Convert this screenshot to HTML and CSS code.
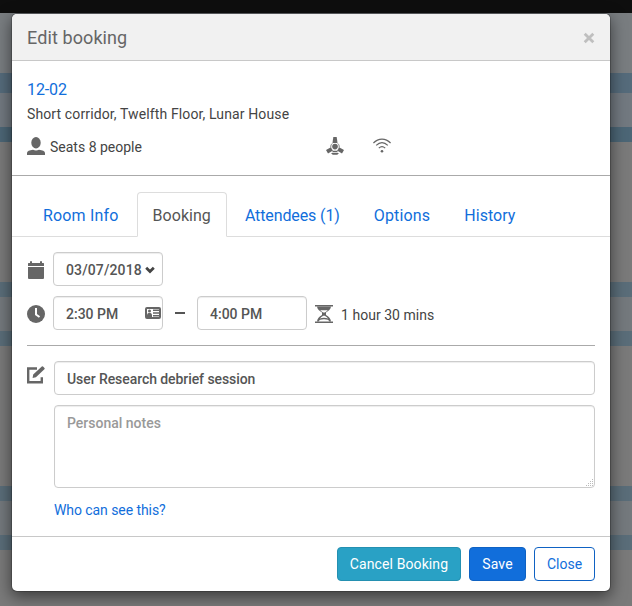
FILE: index.html
```html
<!DOCTYPE html>
<html lang="en">
<head>
<meta charset="utf-8">
<title>Edit booking</title>
<link rel="stylesheet" href="styles.css">
</head>
<body>
<div class="page">
  <div class="topbar"></div>
  <div class="band band-tall"></div>
  <div class="band band-head"></div>
  <div class="band band-mid"></div>
  <div class="band band-edge band-deep"></div>
  <div class="band band-gap"></div>
  <div class="band band-edge"></div>
  <div class="band band-mid band-pale"></div>
  <div class="band band-edge"></div>
  <div class="band band-gap"></div>
  <div class="band band-edge"></div>
  <div class="band band-mid band-pale"></div>
  <div class="band band-edge"></div>
</div>
<div class="modal" role="dialog">
  <header class="modal-header">
    <h4 class="modal-title">Edit booking</h4>
    <button class="dismiss" aria-label="Close dialog"><svg width="12" height="12" viewBox="0 0 12 12"><path d="M1.700 1.700l8.600 8.600M10.300 1.700l-8.600 8.600" stroke="currentColor" stroke-width="2.800"/></svg></button>
  </header>
  <section class="room">
    <a class="room-name">12-02</a>
    <div class="room-place">Short corridor, Twelfth Floor, Lunar House</div>
    <div class="facts">
      <div class="seats">
        <svg class="icon" width="18" height="18" viewBox="0 0 18 18"><ellipse cx="9" cy="5.700" rx="4.700" ry="5.700"/><path d="M6 12.800q3 1.400 6 0c3.500.4 6 1.400 6 3.200v2H0v-2c0-1.800 2.500-2.800 6-3.200z"/></svg>
        <span>Seats 8 people</span>
      </div>
      <svg class="icon phone" width="18" height="18" viewBox="0 0 18 18"><path d="M7.300 0h3.400l.8 6h-5z"/><circle cx="9" cy="9.600" r="2.800"/><path d="M6.300 6.400c-1.700 1.500-1.900 3.400-1.100 5.400M11.700 6.400c1.700 1.500 1.900 3.400 1.100 5.400" class="thin"/><path d="M4.500 10.400l2.500 3.200-5 2.900-2-3.600zM13.500 10.400l-2.500 3.200 5 2.900 2-3.600zM6.900 13.800h4.200l.8 1.400H6.100zM5 16h8l-1.700 1.800H6.700z"/></svg>
      <svg class="icon wifi" width="18" height="16" viewBox="0 0 18 16"><path class="line" d="M.4 6c5-5.300 12.200-5.300 17.200 0M3.200 8.400c3.700-3.800 7.900-3.800 11.600 0M5.800 11.100c2.100-2 4.300-2 6.400 0"/><circle cx="9" cy="14.200" r="1.300"/></svg>
    </div>
  </section>
  <nav class="tabs">
    <a class="tab">Room Info</a>
    <a class="tab snug active">Booking</a>
    <a class="tab tight">Attendees (1)</a>
    <a class="tab">Options</a>
    <a class="tab snug">History</a>
  </nav>
  <main class="form">
    <div class="row">
      <svg class="icon calendar" width="18" height="18" viewBox="0 0 18 18"><path d="M1 5V2.600Q1 2 1.600 2H3V.3h2V2h8V.3h2V2h1.400q.6 0 .6.600V5zM1 6h16v11q0 1-1 1H2q-1 0-1-1z"/></svg>
      <div class="control date"><span>03/07/2018</span><svg width="10" height="8" viewBox="0 0 10 8"><path d="M1.200 1.700L5 5.500l3.800-3.800" fill="none" stroke="#444" stroke-width="2.700"/></svg></div>
    </div>
    <div class="row times">
      <svg class="icon clock" width="18" height="18" viewBox="0 0 18 18"><circle cx="9" cy="9" r="9"/><path d="M9 3v6.500l3.500 2.500" fill="none" stroke="#fff" stroke-width="2"/></svg>
      <div class="control time"><span>2:30 PM</span><svg class="icon card" width="16" height="12" viewBox="0 0 16 12"><rect x="1" y="1" width="14" height="10" rx="1" fill="none" stroke="#666" stroke-width="2"/><circle cx="4.500" cy="4" r="1.500"/><path d="M2 10V8.300q0-1.800 1.500-2.300h2q1.500.5 1.500 2.300V10zM8 2.500h6V4H8zM8 5.200h6v1.500H8zM8 8h6v1.500H8z"/></svg></div>
      <span class="dash"></span>
      <div class="control time">4:00 PM</div>
      <svg class="icon hourglass" width="18" height="18" viewBox="0 0 18 18"><path d="M0 0h18v1.500H0zM0 16.500h18V18H0z"/><path d="M2 1.500h14c-.3 3-2.500 4.500-5 6V10c2.800 1.500 4.800 3.500 5 6.500h-1.700c-.4-1.500-2-2.200-5.300-2.200s-4.900.7-5.300 2.200H2C2.200 13.500 4.200 11.500 7 10V7.500c-2.500-1.500-4.700-3-5-6z"/><path d="M5.200 5.200h7.600c-.8 1-1.900 1.700-3 2.300H8.200c-1.100-.6-2.200-1.300-3-2.300zM8.300 10.800h1.400c1.400.7 2.500 1.500 3.400 2.600-2.300-.8-5.900-.8-8.200 0 .9-1.100 2-1.900 3.400-2.600z" fill="#fff"/></svg>
      <span class="duration">1 hour 30 mins</span>
    </div>
    <hr class="rule">
    <div class="details">
      <svg class="icon" width="18" height="18" viewBox="0 0 18 18"><path d="M10 2.500H1.200v13.800h13.600v-5" fill="none" stroke="#666" stroke-width="2.400"/><path d="M5.600 11.900l.6-3.500 8.600-8q.6-.5 1.200.1l1.500 1.500q.5.600-.1 1.200l-8.500 8.100z"/></svg>
      <div class="fields">
        <div class="control title">User Research debrief session</div>
        <div class="notes-wrap">
          <textarea class="control notes" placeholder="Personal notes"></textarea>
          <svg class="grip" width="8" height="8" viewBox="0 0 8 8"><path d="M6 0h1v1H6zM4 2h1v1H4zM6 2h1v1H6zM2 4h1v1H2zM4 4h1v1H4zM6 4h1v1H6zM0 6h1v1H0zM2 6h1v1H2zM4 6h1v1H4zM6 6h1v1H6z" fill="#bbb"/></svg>
        </div>
        <a class="help">Who can see this?</a>
      </div>
    </div>
  </main>
  <footer class="actions">
    <button class="btn info">Cancel Booking</button>
    <button class="btn primary">Save</button>
    <button class="btn outline">Close</button>
  </footer>
</div>
</body>
</html>
```
FILE: styles.css
```css
* { box-sizing: border-box; }
body {
  margin: 0;
  height: 606px;
  overflow: hidden;
  background: #7a7a7a;
  color: #444;
  font: 14px/20px Roboto, "Liberation Sans", sans-serif;
}
svg { display: block; flex: none; }
.topbar { height: 13px; background: #0e0e0e; }
.band-tall { height: 60px; background: #797d80; }
.band-head { height: 20px; background: #556b7b; }
.band-mid { height: 34px; background: #727980; }
.band-mid.band-pale { background: #74797d; }
.band-edge { height: 15px; background: #5a6d79; }
.band-edge.band-deep { background: #4c6676; }
.band-gap { height: 140px; }

.modal {
  position: absolute;
  top: 13px;
  left: 11px;
  width: 600px;
  height: 579px;
  display: flex;
  flex-direction: column;
  background: #fff;
  background-clip: padding-box;
  border: 1px solid rgba(0, 0, 0, .2);
  border-radius: 6px;
  box-shadow: 0 5px 15px rgba(0, 0, 0, .5);
}
.modal-header {
  height: 47px;
  display: flex;
  align-items: center;
  justify-content: space-between;
  padding: 0 15px;
  background: #f1f1f1;
  border-bottom: 1px solid #c8c8c8;
  border-radius: 5px 5px 0 0;
}
.modal-title { margin: 2px 0 0; font-size: 18px; font-weight: 400; letter-spacing: .1px; color: #666; }
.dismiss { padding: 2px 0 0; border: 0; background: none; color: #bfbfbf; }

.room { height: 115px; padding: 18px 15px 0; border-bottom: 1px solid #aaa; }
.room-name { display: block; font-size: 16px; line-height: 22px; letter-spacing: -.1px; color: #116edb; }
.room-place { margin-top: 3px; letter-spacing: .12px; }
.facts { display: flex; margin-top: 13px; }
.seats { display: flex; gap: 5px; width: 299px; }
.icon { fill: #666; }
.phone .thin { fill: none; stroke: #666; stroke-width: .8; }
.wifi { margin-left: 29px; }
.wifi .line { fill: none; stroke: #666; stroke-width: 1.200; }

.tabs { display: flex; gap: 2px; margin-top: 16px; padding-left: 15px; border-bottom: 1px solid #ddd; }
.tab {
  height: 45px;
  margin-bottom: -1px;
  padding: 12px 15px;
  border: 1px solid transparent;
  border-radius: 4px 4px 0 0;
  font-size: 16px;
  line-height: 21px;
  letter-spacing: .17px;
  color: #116edb;
}
.tab.snug { letter-spacing: .05px; }
.tab.tight { letter-spacing: -.12px; }
.tab.active { color: #555; background: #fff; border-color: #ddd #ddd #fff; }

.form { flex: 1; padding: 15px 15px 0; }
.row { display: flex; align-items: center; height: 34px; }
.calendar { margin-top: 2px; }
.clock { margin-top: 1px; }
.times { margin-top: 10px; }
.control {
  height: 34px;
  padding: 6px 12px;
  border: 1px solid #ccc;
  border-radius: 4px;
  background: #fff;
  box-shadow: inset 0 1px 1px rgba(0, 0, 0, .075);
  color: #555;
  font: 500 14px/22px Roboto, "Liberation Sans", sans-serif;
}
.title { padding-top: 6px; letter-spacing: -.07px; }
.date, .time { display: flex; align-items: center; justify-content: space-between; width: 110px; margin-left: 8px; }
.date { padding-right: 7px; letter-spacing: .13px; }
.row > .control { padding-top: 7px; }
.time { padding-right: 1px; }
.card { margin-top: -2px; }
.dash { width: 10px; height: 2px; margin: 0 4px 0 12px; background: #555; }
.dash + .time { margin-left: 8px; }
.hourglass { margin: 1px 8px 0; }
.duration { margin-top: 3px; letter-spacing: .03px; }
.rule { margin: 15px 0; border: 0; border-top: 1px solid #aaa; }
.details { display: flex; gap: 9px; }
.details > .icon { margin-top: 5px; }
.fields { flex: 1; }
.notes-wrap { position: relative; margin-top: 10px; }
.notes { display: block; width: 100%; height: 83px; resize: none; }
.notes::placeholder { color: #999; opacity: 1; }
.grip { position: absolute; right: 1px; bottom: 1px; }
.help { display: block; margin-top: 12px; letter-spacing: -.07px; color: #116edb; }

.actions { display: flex; justify-content: flex-end; gap: 8px; height: 55px; padding: 10px 15px; border-top: 1px solid #c8c8c8; }
.btn { height: 34px; padding: 0; border: 1px solid; border-radius: 4px; font: 14px/20px Roboto, "Liberation Sans", sans-serif; letter-spacing: .1px; }
.info { width: 124px; color: #fff; background: #29a1c5; border-color: #2490b1; }
.primary { width: 57px; color: #fff; background: #116edb; border-color: #0f62c3; }
.outline { width: 61px; letter-spacing: 0; color: #116edb; background: #fff; border-color: #0f62c3; }
```
